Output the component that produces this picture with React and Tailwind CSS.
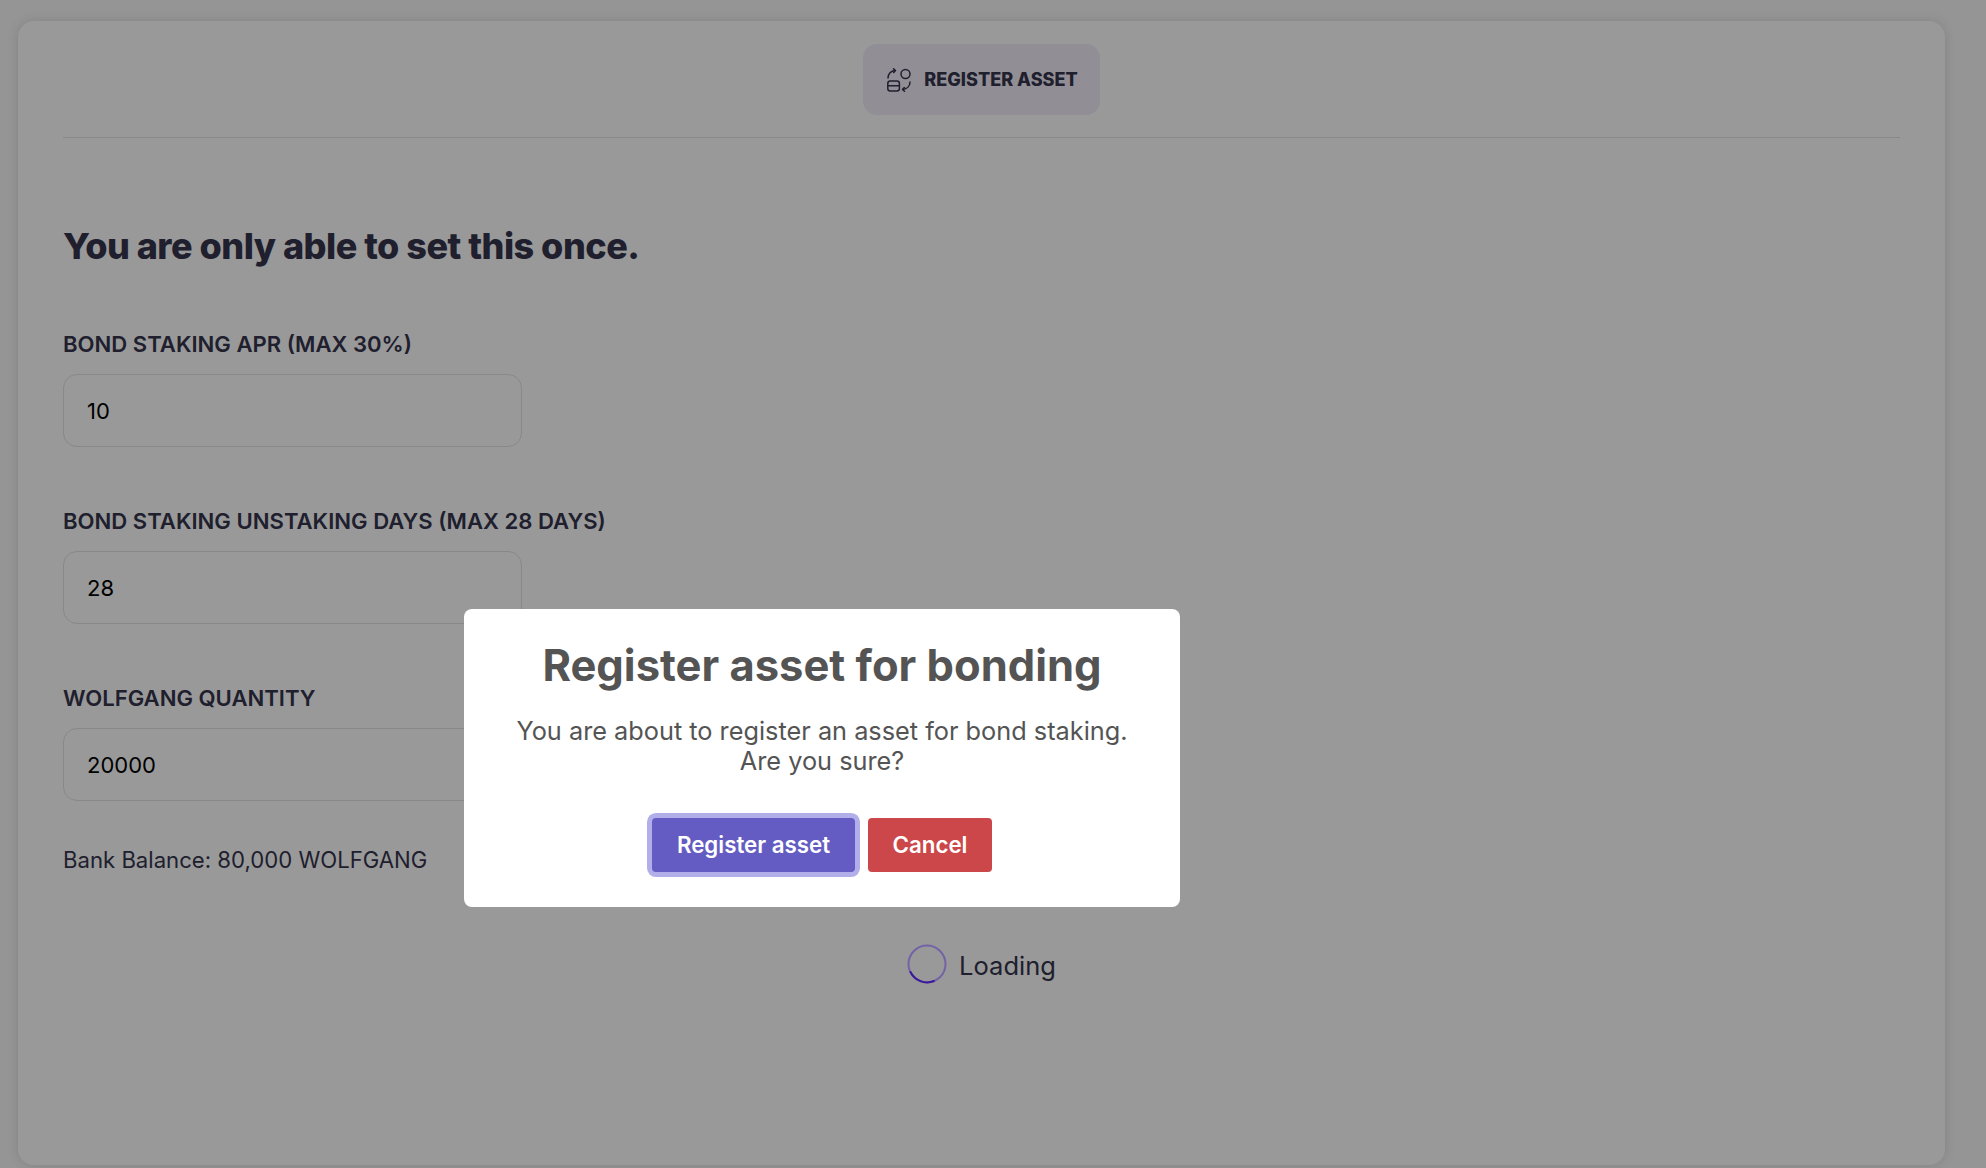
import React from 'react';

const fields = [
  { label: 'BOND STAKING APR (MAX 30%)', value: '10' },
  { label: 'BOND STAKING UNSTAKING DAYS (MAX 28 DAYS)', value: '28' },
  { label: 'WOLFGANG QUANTITY', value: '20000' },
];

function RegisterIcon() {
  return (
    <svg width="24" height="24" viewBox="0 0 24 24" fill="none" stroke="currentColor" strokeWidth="1.5" strokeLinecap="round" strokeLinejoin="round">
      <circle cx="18.5" cy="6" r="4.5" />
      <rect x="0.8" y="13" width="11.6" height="10" rx="2.5" />
      <path d="M0.8 17.8h11.6" />
      <path d="M1 10c0-4 3-7.2 7-7.5" />
      <path d="M6.5 0.8l2 1.7-1.8 2" />
      <path d="M23 14c0 4-3 7-7.2 7.5" />
      <path d="M17.5 23.2l-2-1.7 1.8-2" />
    </svg>
  );
}

export default function App() {
  return (
    <div className="h-[1168px] overflow-hidden bg-[#f8f8f8] pt-[21px] pr-[41px] pl-[18px] font-['Inter',sans-serif] text-[#35354d]">
      <div className="h-[1144px] rounded-[16px] bg-white px-[45px] pt-[23px] shadow-[0_0_12px_rgba(0,0,0,0.12)]">
        <div className="flex justify-center border-b border-[#e3e3e3] pb-[22px]">
          <div className="flex h-[71px] w-[237px] items-center justify-center gap-[13px] rounded-[14px] bg-[#f3edfa] pl-[2px]">
            <RegisterIcon />
            <span className="text-[18.1px] font-extrabold">REGISTER ASSET</span>
          </div>
        </div>

        <h2 className="mt-[84px] text-[36px] leading-[48px] font-extrabold tracking-[-0.5px]">You are only able to set this once.</h2>

        <div className="mt-[58px] flex flex-col gap-[58px]">
          {fields.map((f) => (
            <div key={f.label}>
              <div className="text-[22.1px] leading-[32px] font-semibold">{f.label}</div>
              <div className="mt-[14px] flex h-[73px] w-[459px] items-center rounded-[14px] border border-[#e3e3e3] bg-white px-[23px] pt-[2px] text-[22px] text-black">
                {f.value}
              </div>
            </div>
          ))}
        </div>

        <div className="mt-[43px] text-[22.15px] leading-[32px]">Bank Balance: 80,000 WOLFGANG</div>

        <div className="mt-[68px] flex items-center justify-center gap-[12px]">
          <svg className="relative z-20 mb-[2px]" width="40" height="40" viewBox="0 0 40 40" fill="none">
            <circle cx="20" cy="20" r="18.5" stroke="#7563a8" strokeWidth="2" />
            <path d="M3.5 28A18.5 18.5 0 0 0 27 37" stroke="#3a1a9a" strokeWidth="2" strokeLinecap="round" />
          </svg>
          <span className="pt-[2px] text-[25.5px] leading-[40px]">Loading</span>
        </div>
      </div>

      <div className="fixed inset-0 z-10 bg-black/40">
        <div className="absolute top-[609px] left-[464px] flex h-[298px] w-[716px] flex-col items-center rounded-[8px] bg-white pt-[27px] text-center text-[#545454]">
          <h1 className="text-[43.5px] leading-[58px] font-bold">Register asset for bonding</h1>
          <p className="mt-[22px] text-[25.3px] leading-[30px]">
            You are about to register an asset for bond staking.
            <br />
            Are you sure?
          </p>
          <div className="mt-[42px] flex items-center gap-[13px]">
            <button className="h-[54px] w-[203px] rounded-[4px] bg-[#645cc2] text-[22.3px] font-semibold text-white ring-[5px] ring-[#b2aeea]">Register asset</button>
            <button className="h-[54px] w-[124px] rounded-[4px] bg-[#cc474a] text-[22.3px] font-semibold text-white">Cancel</button>
          </div>
        </div>
      </div>
    </div>
  );
}
